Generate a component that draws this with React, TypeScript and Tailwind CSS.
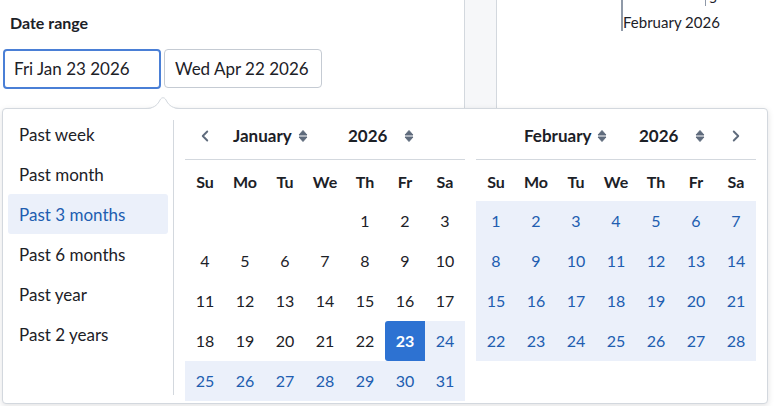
import React from "react";
import { ChevronLeft, ChevronRight } from "lucide-react";

const presets = [
  "Past week",
  "Past month",
  "Past 3 months",
  "Past 6 months",
  "Past year",
  "Past 2 years",
];

const weekdays = ["Su", "Mo", "Tu", "We", "Th", "Fr", "Sa"];

type Day = { n: number | null; state: "none" | "range" | "start" };

const janDays = (): Day[][] => {
  const cells: Day[] = [];
  for (let i = 0; i < 4; i++) cells.push({ n: null, state: "none" });
  for (let d = 1; d <= 31; d++) {
    cells.push({ n: d, state: d < 23 ? "none" : d === 23 ? "start" : "range" });
  }
  const rows: Day[][] = [];
  for (let i = 0; i < cells.length; i += 7) rows.push(cells.slice(i, i + 7));
  return rows;
};

const febDays = (): Day[][] => {
  const rows: Day[][] = [];
  for (let r = 0; r < 4; r++) {
    const row: Day[] = [];
    for (let c = 0; c < 7; c++) row.push({ n: r * 7 + c + 1, state: "range" });
    rows.push(row);
  }
  return rows;
};

const Caret = () => (
  <svg width="12" height="16" viewBox="0 0 12 16" className="text-[#5f6b7c]">
    <path d="M2 7 L6 2.5 L10 7 Z" fill="currentColor" strokeLinejoin="round" stroke="currentColor" strokeWidth="1" />
    <path d="M2 9 L6 13.5 L10 9 Z" fill="currentColor" strokeLinejoin="round" stroke="currentColor" strokeWidth="1" />
  </svg>
);

const DayCell = ({ day }: { day: Day }) => {
  if (day.n === null) return <div className="w-[40px] h-[40px]" />;
  if (day.state === "start")
    return (
      <div className="w-[40px] h-[40px] flex items-center justify-center bg-[#2d72d2] text-white font-bold rounded-l-[3px]">
        {day.n}
      </div>
    );
  if (day.state === "range")
    return (
      <div className="w-[40px] h-[40px] flex items-center justify-center bg-[#ebf0fa] text-[#215db0]">
        {day.n}
      </div>
    );
  return (
    <div className="w-[40px] h-[40px] flex items-center justify-center text-[#1c2127]">
      {day.n}
    </div>
  );
};

const Month = ({
  name,
  rows,
  left,
}: {
  name: string;
  rows: Day[][];
  left: boolean;
}) => (
  <div className="w-[280px] flex flex-col">
    <div className="h-[45px] pt-[1px] pb-[4px] border-b border-[#d3d8de] flex items-center">
      <div className="w-[40px] flex justify-center">
        {left && <ChevronLeft size={18} strokeWidth={2.5} className="text-[#5f6b7c]" />}
      </div>
      <div className="flex-1 flex items-center pl-[8px] text-[17px] font-bold text-[#1c2127]">
        <div className="w-[115px] flex items-center">
          <span>{name}</span>
          <span className="ml-[5px]">
            <Caret />
          </span>
        </div>
        <div className="flex items-center">
          <span className="w-[55px]">2026</span>
          <Caret />
        </div>
      </div>
      <div className="w-[40px] flex justify-center">
        {!left && <ChevronRight size={18} strokeWidth={2.5} className="text-[#5f6b7c]" />}
      </div>
    </div>
    <div className="flex h-[41px] pt-[3px]">
      {weekdays.map((w) => (
        <div key={w} className="w-[40px] flex items-center justify-center font-bold text-[#1c2127]">
          {w}
        </div>
      ))}
    </div>
    {rows.map((row, i) => (
      <div key={i} className="flex">
        {row.map((d, j) => (
          <DayCell key={j} day={d} />
        ))}
      </div>
    ))}
  </div>
);

export default function App() {
  return (
    <div
      className="relative w-[774px] h-[406px] overflow-hidden bg-white text-[16px] text-[#1c2127]"
      style={{ fontFamily: "Lato, 'Noto Sans', sans-serif" }}
    >
      {/* background page */}
      <div className="flex">
        <div className="w-[464px] pl-[3px]">
          <div className="pl-[7px] pt-[11px] h-[49px] font-bold text-[16px]">Date range</div>
          <div className="flex gap-[3px] text-[17px]">
            <div className="w-[158px] h-[40px] rounded-[4px] border-2 border-[#4a7fd6] flex items-center pl-[9px]">
              Fri Jan 23 2026
            </div>
            <div className="w-[158px] h-[39px] rounded-[4px] border border-[#c5cbd3] flex items-center pl-[10px]">
              Wed Apr 22 2026
            </div>
          </div>
        </div>
        <div className="w-[33px] h-[108px] bg-[#f6f7f9] border-x border-[#d3d8de]" />
        <div className="flex-1 pl-[124px]">
          <div className="flex">
            <div className="w-[2px] h-[31px] bg-[#8f99a8]" />
            <div className="flex-1 relative">
              <div className="absolute left-[82px] top-0 w-[1px] h-[6px] bg-[#8f99a8]" />
              <div className="absolute left-[86px] top-[-11px] text-[14px] leading-[18px] text-[#1c2127]">5</div>
              <div className="absolute left-[0px] top-[12px] text-[15px] leading-[20px] text-[#1c2127]">
                February 2026
              </div>
            </div>
          </div>
        </div>
      </div>

      {/* popover */}
      <div className="absolute left-[2px] top-[108px] w-[766px] h-[296px] bg-white border border-[#d3d8de] rounded-[4px] shadow-[0_2px_6px_rgba(17,20,24,0.12)] flex pl-[5px] pt-[5px]">
        <div className="w-[160px] flex flex-col text-[17px]">
          {presets.map((p, i) => (
            <div
              key={p}
              className={
                i === 2
                  ? "h-[40px] flex items-center pl-[11px] pt-[2px] rounded-[3px] bg-[#ebf0fa] text-[#215db0]"
                  : "h-[40px] flex items-center pl-[11px] pt-[2px] text-[#1c2127]"
              }
            >
              {p}
            </div>
          ))}
        </div>
        <div className="w-[1px] ml-[5px] mt-[6px] mb-[8px] bg-[#d3d8de]" />
        <div className="flex ml-[11px] gap-[11px] pt-[1px]">
          <Month name="January" rows={janDays()} left={true} />
          <Month name="February" rows={febDays()} left={false} />
        </div>
      </div>

      {/* popover arrow */}
      <svg className="absolute left-[145px] top-[94px]" width="36" height="16" viewBox="0 0 36 16">
        <path d="M0 15 C8 15 12 12 15 6 C16.5 3 19.5 3 21 6 C24 12 28 15 36 15 L36 16 L0 16 Z" fill="white" />
        <path d="M0 14.5 C8 14.5 12 12 15 6 C16.5 3 19.5 3 21 6 C24 12 28 14.5 36 14.5" fill="none" stroke="#d3d8de" strokeWidth="1" />
      </svg>
    </div>
  );
}
